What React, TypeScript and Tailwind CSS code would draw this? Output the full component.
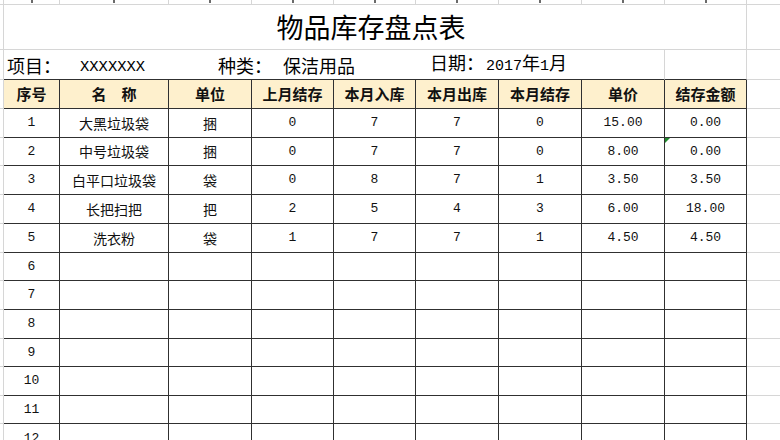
import React from 'react'

// column widths incl. right border (table spans x 4 → 746)
const cols = [56, 109, 83, 82, 82, 83, 83, 83, 82]
const rowHeights = [29, 28, 29, 29, 29, 28, 29, 29, 28, 29, 28, 30]

const headers = ['序号', '名\u3000称', '单位', '上月结存', '本月入库', '本月出库', '本月结存', '单价', '结存金额']

const items = [
  { name: '大黑垃圾袋', unit: '捆', last: '0', inQ: '7', out: '7', bal: '0', price: '15.00', amount: '0.00' },
  { name: '中号垃圾袋', unit: '捆', last: '0', inQ: '7', out: '7', bal: '0', price: '8.00', amount: '0.00' },
  { name: '白平口垃圾袋', unit: '袋', last: '0', inQ: '8', out: '7', bal: '1', price: '3.50', amount: '3.50' },
  { name: '长把扫把', unit: '把', last: '2', inQ: '5', out: '4', bal: '3', price: '6.00', amount: '18.00' },
  { name: '洗衣粉', unit: '袋', last: '1', inQ: '7', out: '7', bal: '1', price: '4.50', amount: '4.50' },
]

const cjk = "font-['Noto_Sans_CJK_SC',sans-serif]"
const mono = "font-['Liberation_Mono','Noto_Sans_CJK_SC',monospace]"

function Cell({ width, value, flag }: { width: number; value: string; flag?: boolean }) {
  const isNum = /^[0-9.]+$/.test(value)
  return (
    <div
      className="relative flex shrink-0 items-center justify-center border-r border-b border-[#303030] text-[#111]"
      style={{ width }}
    >
      {flag && (
        <span className="absolute left-0 top-0 h-0 w-0 border-t-[5px] border-r-[5px] border-t-[#1f8a2c] border-r-transparent" />
      )}
      {value && (
        <span className={isNum ? `${mono} text-[13px]` : `${cjk} text-[14px]`}>{value}</span>
      )}
    </div>
  )
}

function Sliver() {
  return <div className="w-[4px] shrink-0 border-r border-b border-[#d6d6d6]" />
}

export default function App() {
  return (
    <div className="h-[440px] w-[780px] overflow-hidden bg-white">
      {/* cut-off row above */}
      <div className="flex h-[5px]">
        <Sliver />
        {cols.map((w, i) => (
          <div key={i} className="flex shrink-0 justify-center border-r border-b border-[#d6d6d6]" style={{ width: w }}>
            <span className="h-[3px] w-[2px] bg-[#6a6a6a]" />
          </div>
        ))}
        <div className="flex-1 border-b border-[#d6d6d6]" />
      </div>

      {/* title */}
      <div className="flex h-[45px]">
        <Sliver />
        <div className="flex w-[743px] shrink-0 items-center justify-center border-r border-b border-[#d6d6d6] pr-2">
          <span className={`${cjk} text-[27px] text-black`}>物品库存盘点表</span>
        </div>
        <div className="flex-1 border-b border-[#d6d6d6]" />
      </div>

      {/* info line */}
      <div className="flex h-[30px]">
        <Sliver />
        <div className={`flex w-[661px] shrink-0 items-center border-r border-b border-r-[#d6d6d6] border-b-[#303030] pl-[3px] text-[18px] leading-[24px] text-black ${cjk}`}>
          <span className="w-[73px] shrink-0">项目：</span>
          <span className="w-[138px] shrink-0">
            <span className={`${mono} text-[15.5px]`}>XXXXXXX</span>
          </span>
          <span className="w-[65px] shrink-0">种类：</span>
          <span className="w-[147px] shrink-0">保洁用品</span>
          <span>
            日期：<span className={`${mono} ml-[2px] text-[15px]`}>2017</span>年
            <span className={`${mono} text-[15px]`}>1</span>月
          </span>
        </div>
        <div className="w-[82px] shrink-0 border-r border-b border-r-[#d6d6d6] border-b-[#303030]" />
        <div className="flex-1 border-b border-[#d6d6d6]" />
      </div>

      {/* header */}
      <div className="flex h-[29px]">
        <Sliver />
        {headers.map((h, i) => (
          <div
            key={h}
            className={`flex shrink-0 items-center justify-center border-r border-b border-[#303030] bg-[#fef0cd] ${cjk} text-[15px] font-bold text-[#111]`}
            style={{ width: cols[i] }}
          >
            {h}
          </div>
        ))}
        <div className="flex-1 border-b border-[#d6d6d6]" />
      </div>

      {/* body */}
      {rowHeights.map((h, r) => {
        const it = items[r]
        const values = it
          ? [String(r + 1), it.name, it.unit, it.last, it.inQ, it.out, it.bal, it.price, it.amount]
          : [String(r + 1), '', '', '', '', '', '', '', '']
        return (
          <div key={r} className="flex" style={{ height: h }}>
            <Sliver />
            {values.map((v, i) => (
              <Cell key={i} width={cols[i]} value={v} flag={r === 1 && i === 8} />
            ))}
            <div className="flex-1 border-b border-[#d6d6d6]" />
          </div>
        )
      })}
    </div>
  )
}
